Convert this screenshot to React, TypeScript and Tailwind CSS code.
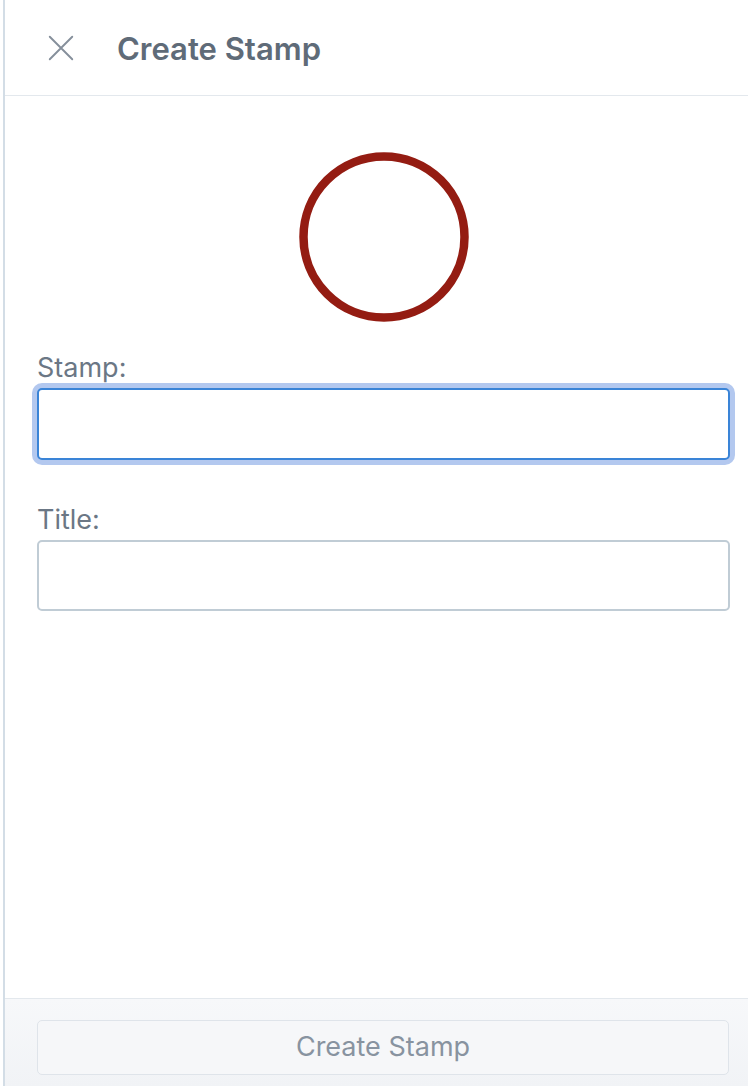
import React from "react";

export default function App() {
  return (
    <div
      className="w-[748px] h-[1086px] bg-white flex flex-col pl-[3px]"
      style={{ fontFamily: "Inter, 'Noto Sans', sans-serif" }}
    >
      <div className="flex-1 flex flex-col border-l-2 border-[#d3dde6]">
        <div className="h-[96px] flex items-center border-b border-[#e3e8ed] shrink-0">
          <div className="w-[112px] flex items-center pl-[41px]">
            <svg width="30" height="30" viewBox="0 0 24 24" fill="none" stroke="#858f9b" strokeWidth="1.5" strokeLinecap="round">
              <path d="M3 3L21 21M21 3L3 21" />
            </svg>
          </div>
          <h1 className="text-[31px] font-semibold text-[#5f6b78] leading-none mt-[1px]">Create Stamp</h1>
        </div>
        <div className="flex-1 flex flex-col pl-[32px] pr-[18px]">
          <div className="flex justify-center pt-[55px]">
            <svg width="172" height="172" viewBox="0 0 172 172">
              <circle cx="86" cy="86" r="80.5" fill="none" stroke="#941c12" strokeWidth="8.5" />
            </svg>
          </div>
          <label className="mt-[29px] text-[27px] text-[#6b7785] leading-[32px]">Stamp:</label>
          <div className="mt-[4px] h-[72px] rounded-[5px] border-2 border-[#3a84d7] bg-white shadow-[0_0_0_5px_#b3c8ef]" />
          <label className="mt-[44px] text-[27px] text-[#6b7785] leading-[32px]">Title:</label>
          <div className="mt-[4px] h-[71px] rounded-[5px] border-2 border-[#c0ccd5] bg-white" />
        </div>
        <div className="h-[88px] shrink-0 border-t border-[#e3e8ed] bg-gradient-to-b from-[#f7f8fa] to-[#f1f3f6] pl-[32px] pr-[19px] pt-[21px]">
          <button className="w-full h-[55px] rounded-[5px] border-[1.5px] border-[#dfe4ea] bg-[#f6f7f9] text-[27px] text-[#8893a0]">
            Create Stamp
          </button>
        </div>
      </div>
    </div>
  );
}
